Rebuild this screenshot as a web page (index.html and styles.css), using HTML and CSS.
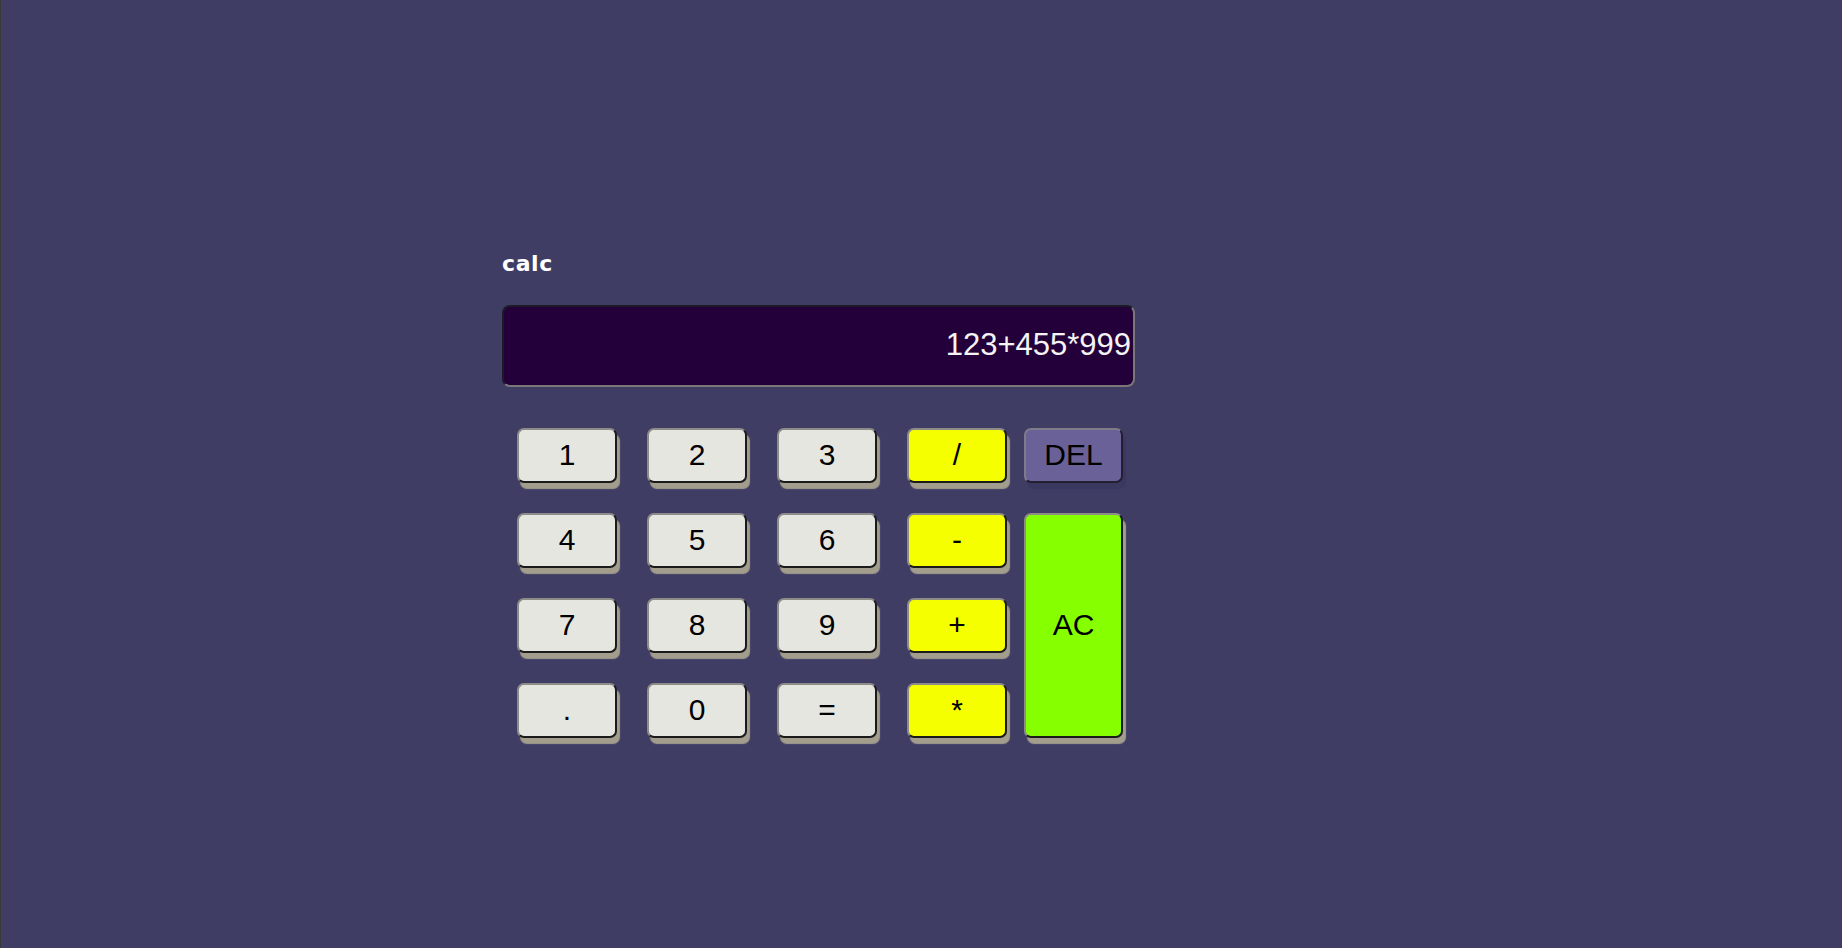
FILE: index.html
```html
<!DOCTYPE html>
<html lang="en">
<head>
<meta charset="utf-8">
<title>calc</title>
<link rel="stylesheet" href="styles.css">
</head>
<body>
<main class="app">
  <h1 class="title">calc</h1>
  <div class="display">123+455*999</div>
  <div class="keypad">
    <button class="key">1</button>
    <button class="key">2</button>
    <button class="key">3</button>
    <button class="key op">/</button>
    <button class="key del">DEL</button>
    <button class="key">4</button>
    <button class="key">5</button>
    <button class="key">6</button>
    <button class="key op">-</button>
    <button class="key ac">AC</button>
    <button class="key">7</button>
    <button class="key">8</button>
    <button class="key">9</button>
    <button class="key op">+</button>
    <button class="key">.</button>
    <button class="key">0</button>
    <button class="key">=</button>
    <button class="key op">*</button>
  </div>
</main>
</body>
</html>
```

FILE: styles.css
```css
html, body {
  margin: 0;
  padding: 0;
}

body {
  min-height: 948px;
  background: #403d65;
  border-left: 1px solid #383838;
  box-sizing: border-box;
}

.app {
  padding: 253px 0 0 501px;
}

.title {
  margin: 0;
  font-family: "DejaVu Sans", Lato, sans-serif;
  font-weight: 700;
  font-size: 22px;
  line-height: 21px;
  color: #ffffff;
  letter-spacing: 0.6px;
}

.display {
  box-sizing: border-box;
  margin-top: 31px;
  width: 633px;
  height: 82px;
  padding: 0 2px 2px 0;
  border: 2px solid;
  border-color: #1d1a28 #7a7878 #7a7878 #1d1a28;
  border-radius: 8px;
  background: #24003a;
  color: #f4f4f4;
  font-family: "Liberation Sans", Arial, sans-serif;
  font-size: 31px;
  line-height: 76px;
  text-align: right;
}

.keypad {
  margin: 41px 0 0 15px;
  display: grid;
  grid-template-columns: 130px 130px 130px 117px 99px;
  grid-template-rows: repeat(4, 55px);
  row-gap: 30px;
}

.key {
  box-sizing: border-box;
  width: 100px;
  height: 55px;
  margin: 0;
  padding: 0 0 2px;
  display: flex;
  align-items: center;
  justify-content: center;
  border: 2px solid;
  border-color: #8d8c88 #1a1a1a #1a1a1a #8d8c88;
  border-radius: 7px;
  background: #e6e6e1;
  color: #000000;
  font-family: "Liberation Sans", Arial, sans-serif;
  font-size: 30px;
  box-shadow: 3px 6px 1px #a29d8d;
}

.op {
  background: #f6ff00;
}

.del {
  width: 99px;
  background: #6a6198;
  border-color: #7f7c8a #222030 #222030 #7f7c8a;
  box-shadow: 3px 6px 1px #3b385f;
}

.ac {
  width: 99px;
  height: auto;
  grid-row: span 3;
  align-self: stretch;
  background: #86ff00;
}
```
